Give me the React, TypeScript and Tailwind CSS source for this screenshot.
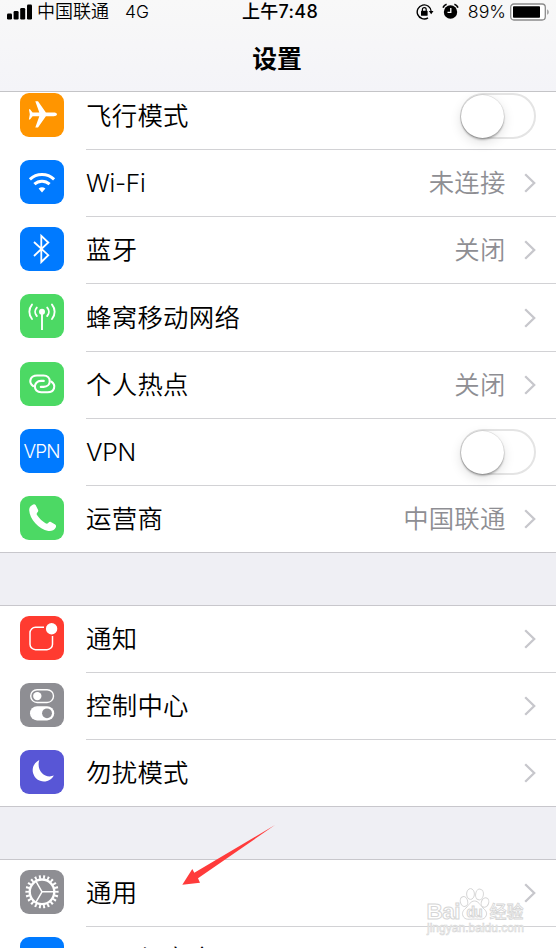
import type { ReactNode } from "react";

type Row = {
  label: string;
  icon: ReactNode;
  color: string;
  height: string;
  value?: string;
  toggle?: boolean;
  latin?: boolean;
};

const Plane = () => (
  <path
    fill="#fff"
    d="M37 21.3c0-1.3-1.600-1.900-3.200-1.900h-7.900L18 8.200h-2.700L19.300 19.400h-6.700l-2.600-3.200H8.900l.9 5.100-.9 5.100H10l2.600-3.200h6.700l-4 11.200H18l7.900-11.200h7.900c1.600 0 3.200-.6 3.200-1.900z"
  />
);

const Wifi = () => (
  <g>
    <path d="M9.900 19.400a17.500 17.500 0 0 1 24.200 0" fill="none" stroke="#fff" strokeWidth="3" />
    <path d="M14.400 24.200a11.200 11.200 0 0 1 15.200 0" fill="none" stroke="#fff" strokeWidth="3" />
    <path d="M18.600 28.600a5.200 5.200 0 0 1 6.800 0L22 32.400z" fill="#fff" />
  </g>
);

const Bluetooth = () => (
  <path d="M14 15l14.300 13.200-7 6.800V8.800l7 6.700L14 29" fill="none" stroke="#fff" strokeWidth="1.800" />
);

const Cellular = () => (
  <g fill="none" stroke="#fff" strokeWidth="1.900" strokeLinecap="round">
    <path d="M22 18v18" strokeLinecap="butt" />
    <circle cx="22" cy="17.800" r="3" fill="#fff" stroke="none" />
    <path d="M16.800 13.600a6.200 6.200 0 0 0 0 8.400M27.200 13.600a6.200 6.200 0 0 1 0 8.400" />
    <path d="M12 10.600a11.200 11.200 0 0 0 0 14.400M32 10.600a11.200 11.200 0 0 1 0 14.400" />
  </g>
);

const Hotspot = () => (
  <g fill="none" stroke="#fff" strokeWidth="2.100" strokeLinecap="round">
    <path d="M13.200 24.200C8 20.400 10.200 13.500 17 13.500h6.500c8.300 0 8.300 11.400 0 11.400h-2.700" />
    <path d="M31.400 19.600c5.200 3.800 3 10.700-3.800 10.700h-6.500c-8.300 0-8.300-11.400 0-11.400h2.700" />
  </g>
);

const Vpn = () => (
  <text x="22" y="28.600" textAnchor="middle" fill="#fff" fontSize="18.800" textLength="37" className="font-[Inter,sans-serif] font-[350]">
    VPN
  </text>
);

const Phone = () => (
  <path
    fill="#fff"
    d="M12.300 8.900c1-.8 2.500-1 3.300 0l2.400 4.800c.5 1.100.2 1.800-.7 2.800-.8 1-.8 1.700-.1 2.800 2.100 3.300 5 6 8.300 8 1.200.7 1.900.5 2.700-.4.8-1 1.600-1.500 2.700-.9l4.300 2.600c1.100.7 1.100 2 .4 3.100-1.500 2.500-4.200 3.700-7.300 3.200C18.800 33.300 9.600 22.800 9.200 14.200c-.1-2.400.9-4.200 3.100-5.300z"
  />
);

const Notifications = () => (
  <g>
    <path
      d="M24 11.300h-8.500a5.500 5.500 0 0 0-5.500 5.500v11.400a5.500 5.500 0 0 0 5.500 5.500h11.500a5.500 5.500 0 0 0 5.500-5.500V20"
      fill="none"
      stroke="#fff"
      strokeWidth="1.500"
    />
    <circle cx="31.600" cy="12.700" r="5.700" fill="#fff" />
  </g>
);

const Controls = () => (
  <g>
    <rect x="10.700" y="6.700" width="22.800" height="12.800" rx="6.400" fill="none" stroke="#fff" strokeWidth="1.400" />
    <circle cx="17.300" cy="13.100" r="4.200" fill="#fff" />
    <rect x="10" y="23.200" width="24.200" height="14.200" rx="7.100" fill="#fff" />
    <circle cx="27" cy="30.300" r="4.900" fill="#8e8e93" />
  </g>
);

const Moon = () => (
  <path fill="#fff" d="M19.300 9.900A11.300 11.300 0 1 0 33.900 25.600C25 29 16 21 19.300 9.900z" />
);

const Gear = () => (
  <g fill="none" stroke="#fff">
    <circle cx="22" cy="21.800" r="12.300" strokeWidth="2.400" />
    <circle cx="22" cy="21.800" r="14.800" strokeWidth="3.600" pathLength="220" strokeDasharray="4.600 5.400" strokeDashoffset="2.300" />
    <path d="M22 21.800h12M22 21.800L16 11.400M22 21.800L16 32.200" strokeWidth="1.500" />
  </g>
);

const network: Row[] = [
  { label: "飞行模式", icon: <Plane />, color: "bg-[#ff9500]", height: "h-[67px]", toggle: true },
  { label: "Wi-Fi", icon: <Wifi />, color: "bg-[#007aff]", height: "h-[67px]", value: "未连接", latin: true },
  { label: "蓝牙", icon: <Bluetooth />, color: "bg-[#007aff]", height: "h-[67px]", value: "关闭" },
  { label: "蜂窝移动网络", icon: <Cellular />, color: "bg-[#4cd964]", height: "h-[68px]" },
  { label: "个人热点", icon: <Hotspot />, color: "bg-[#4cd964]", height: "h-[67px]", value: "关闭" },
  { label: "VPN", icon: <Vpn />, color: "bg-[#007aff]", height: "h-[67px]", toggle: true, latin: true },
  { label: "运营商", icon: <Phone />, color: "bg-[#4cd964]", height: "h-[67px]", value: "中国联通" },
];

const alerts: Row[] = [
  { label: "通知", icon: <Notifications />, color: "bg-[#ff3b30]", height: "h-[67px]" },
  { label: "控制中心", icon: <Controls />, color: "bg-[#8e8e93]", height: "h-[67px]" },
  { label: "勿扰模式", icon: <Moon />, color: "bg-[#5856d6]", height: "h-[67px]" },
];

const general: Row[] = [
  { label: "通用", icon: <Gear />, color: "bg-[#8e8e93]", height: "h-[67px]" },
  { label: "显示与亮度", icon: null, color: "bg-[#007aff]", height: "h-[65px]" },
];

function Toggle() {
  return (
    <span className="flex h-[46px] w-[76px] shrink-0 items-center rounded-full border-2 border-[#e4e4e4] bg-white">
      <span className="-ml-px size-[43px] rounded-full bg-white shadow-[0_0_1px_0.500px_rgba(0,0,0,0.14),0_2px_2px_rgba(0,0,0,0.24),0_4px_12px_rgba(0,0,0,0.13)]" />
    </span>
  );
}

function Chevron() {
  return (
    <svg className="ml-[18.500px] h-5 w-3 shrink-0" viewBox="0 0 12 20" fill="none">
      <path d="M1.200 1.200L10.200 10L1.200 18.800" stroke="#c7c7cc" strokeWidth="2.300" />
    </svg>
  );
}

function Group({ rows }: { rows: Row[] }) {
  return (
    <section className="border-b border-[#c8c7cc] bg-white">
      {rows.map((row, i) => {
        const last = i === rows.length - 1;
        return (
          <div key={row.label} className={`flex pl-5 ${row.height} ${last ? "-mb-px" : ""}`}>
            <div className={`mt-[10px] size-[43.500px] shrink-0 overflow-hidden rounded-[9px] ${row.color}`}>
              <svg viewBox="0 0 43.500 43.500" className="size-full">
                {row.icon}
              </svg>
            </div>
            <div
              className={`ml-[22.500px] flex flex-1 items-center border-b pr-5 text-[25.400px] font-[350] leading-[36px] ${
                last ? "border-transparent" : "border-[#d2d2d5]"
              }`}
            >
              <span className={`flex-1 text-black ${row.latin ? "text-[24.600px] tracking-[-0.300px]" : "tracking-[0.300px]"}`}>
                {row.label}
              </span>
              {row.value && <span className="tracking-[0.200px] text-[#8e8e93]">{row.value}</span>}
              {row.toggle ? <Toggle /> : <Chevron />}
            </div>
          </div>
        );
      })}
    </section>
  );
}

function StatusBar() {
  return (
    <div className="grid h-[23px] grid-cols-[1fr_auto_1fr] items-center text-[18px] leading-[23px] text-black">
      <div className="flex items-center pl-[7px] font-[350]">
        <svg width="26" height="16" viewBox="0 0 26 16">
          <rect x="0" y="9.500" width="5" height="6" rx="1.200" />
          <rect x="6.600" y="7" width="5" height="8.500" rx="1.200" />
          <rect x="13.200" y="4" width="5" height="11.500" rx="1.200" />
          <rect x="20" y="0.500" width="5" height="15" rx="1.200" />
        </svg>
        <span className="ml-[4px]">中国联通</span>
        <span className="ml-[16px] text-[17.500px]">4G</span>
      </div>
      <span className="pl-[4px] font-medium tracking-[0.300px]">上午7:48</span>
      <div className="flex items-center justify-end pr-[5px]">
        <svg width="18" height="18" viewBox="0 0 18 18" fill="none" stroke="#000">
          <path d="M12 14.800A7 7 0 1 1 15.200 8.500" strokeWidth="1.400" />
          <path d="M12.800 8h4.700l-2.300 3.200z" fill="#000" stroke="none" />
          <rect x="5" y="7.800" width="6.600" height="5" rx=".6" fill="#000" stroke="none" />
          <path d="M6.400 8V6.500a1.900 1.900 0 0 1 3.800 0V8" strokeWidth="1.200" />
        </svg>
        <svg className="ml-[8px]" width="17" height="17" viewBox="0 0 17 17">
          <circle cx="8.500" cy="9" r="6.700" />
          <path d="M1 4.600A6 6 0 0 1 4.600 1.300M16 4.600A6 6 0 0 0 12.400 1.300" stroke="#000" strokeWidth="1.700" fill="none" />
          <path d="M8.800 5v4.300H5.500" stroke="#fff" strokeWidth="1.300" fill="none" />
        </svg>
        <span className="ml-[8.500px] text-[17.800px] font-[350]">89%</span>
        <svg className="ml-[4px]" width="41" height="18" viewBox="0 0 41 18">
          <rect x="0.700" y="1" width="34.600" height="16" rx="3.200" fill="#fff" stroke="#8b8b8b" strokeWidth="1.300" />
          <rect x="3" y="3.300" width="27" height="11.400" rx=".8" />
          <path d="M37.200 6.500c2 .6 2 4.600 0 5.200z" fill="#999" />
        </svg>
      </div>
    </div>
  );
}

function Watermark() {
  return (
    <svg
      className="pointer-events-none absolute left-[422px] top-[884px] font-['Liberation_Sans','Noto_Sans_CJK_SC',sans-serif]"
      width="112"
      height="56"
      viewBox="0 0 112 56"
      fill="#fff"
      stroke="#d6d6d6"
      strokeWidth="1"
    >
      <text x="4.500" y="34.500" fontSize="22.500" fontWeight="700" textLength="34">Bai</text>
      <ellipse cx="42" cy="17.500" rx="3.700" ry="5" transform="rotate(-15 42 17.500)" />
      <ellipse cx="48.500" cy="10" rx="3.900" ry="5.400" />
      <ellipse cx="57.500" cy="10.500" rx="3.900" ry="5.400" transform="rotate(8 57.500 10.500)" />
      <ellipse cx="63" cy="18.500" rx="3.700" ry="4.800" transform="rotate(20 63 18.500)" />
      <path d="M52.500 17c4 0 5.500 4 8.500 7 3 2.500 4.500 5 3 8-2 4.500-6.500 3-11.500 3s-9.500 1.500-11.500-3c-1.500-3.500.5-6 3-8 3-3 4.500-7 8.500-7z" />
      <text x="44.500" y="32.500" fontSize="14" fontWeight="700" textLength="16">du</text>
      <text x="67.500" y="33.500" fontSize="17" fontWeight="500" textLength="34" strokeWidth="0.800">经验</text>
      <text x="5" y="48" fontSize="12" textLength="97" strokeWidth="0.600">jingyan.baidu.com</text>
    </svg>
  );
}

export default function App() {
  return (
    <div className="relative flex h-[948px] w-[556px] flex-col overflow-hidden bg-[#efeff4] font-[Inter,'Noto_Sans_CJK_SC',sans-serif]">
      <header className="z-10 h-[92px] shrink-0 border-b border-[#c4c4c7] bg-linear-to-b from-[#f8f8f8] to-[#f4f4f8]">
        <StatusBar />
        <h1 className="mt-[18px] pr-[2px] text-center text-[24.800px] font-bold leading-[36px] text-black">设置</h1>
      </header>
      <main className="-mt-[9px] flex shrink-0 flex-col">
        <Group rows={network} />
        <div className="h-[52px]" />
        <div className="border-t border-[#c8c7cc]">
          <Group rows={alerts} />
        </div>
        <div className="h-[52px]" />
        <div className="border-t border-[#c8c7cc]">
          <Group rows={general} />
        </div>
      </main>
      <svg className="pointer-events-none absolute left-[180px] top-[822px]" width="98" height="66" viewBox="180 822 98 66">
        <path d="M182.300 884.700L192.300 869L194.300 872.700L275 825L198 878.300L200 882.700z" fill="#ff3b3b" />
      </svg>
      <Watermark />
    </div>
  );
}
